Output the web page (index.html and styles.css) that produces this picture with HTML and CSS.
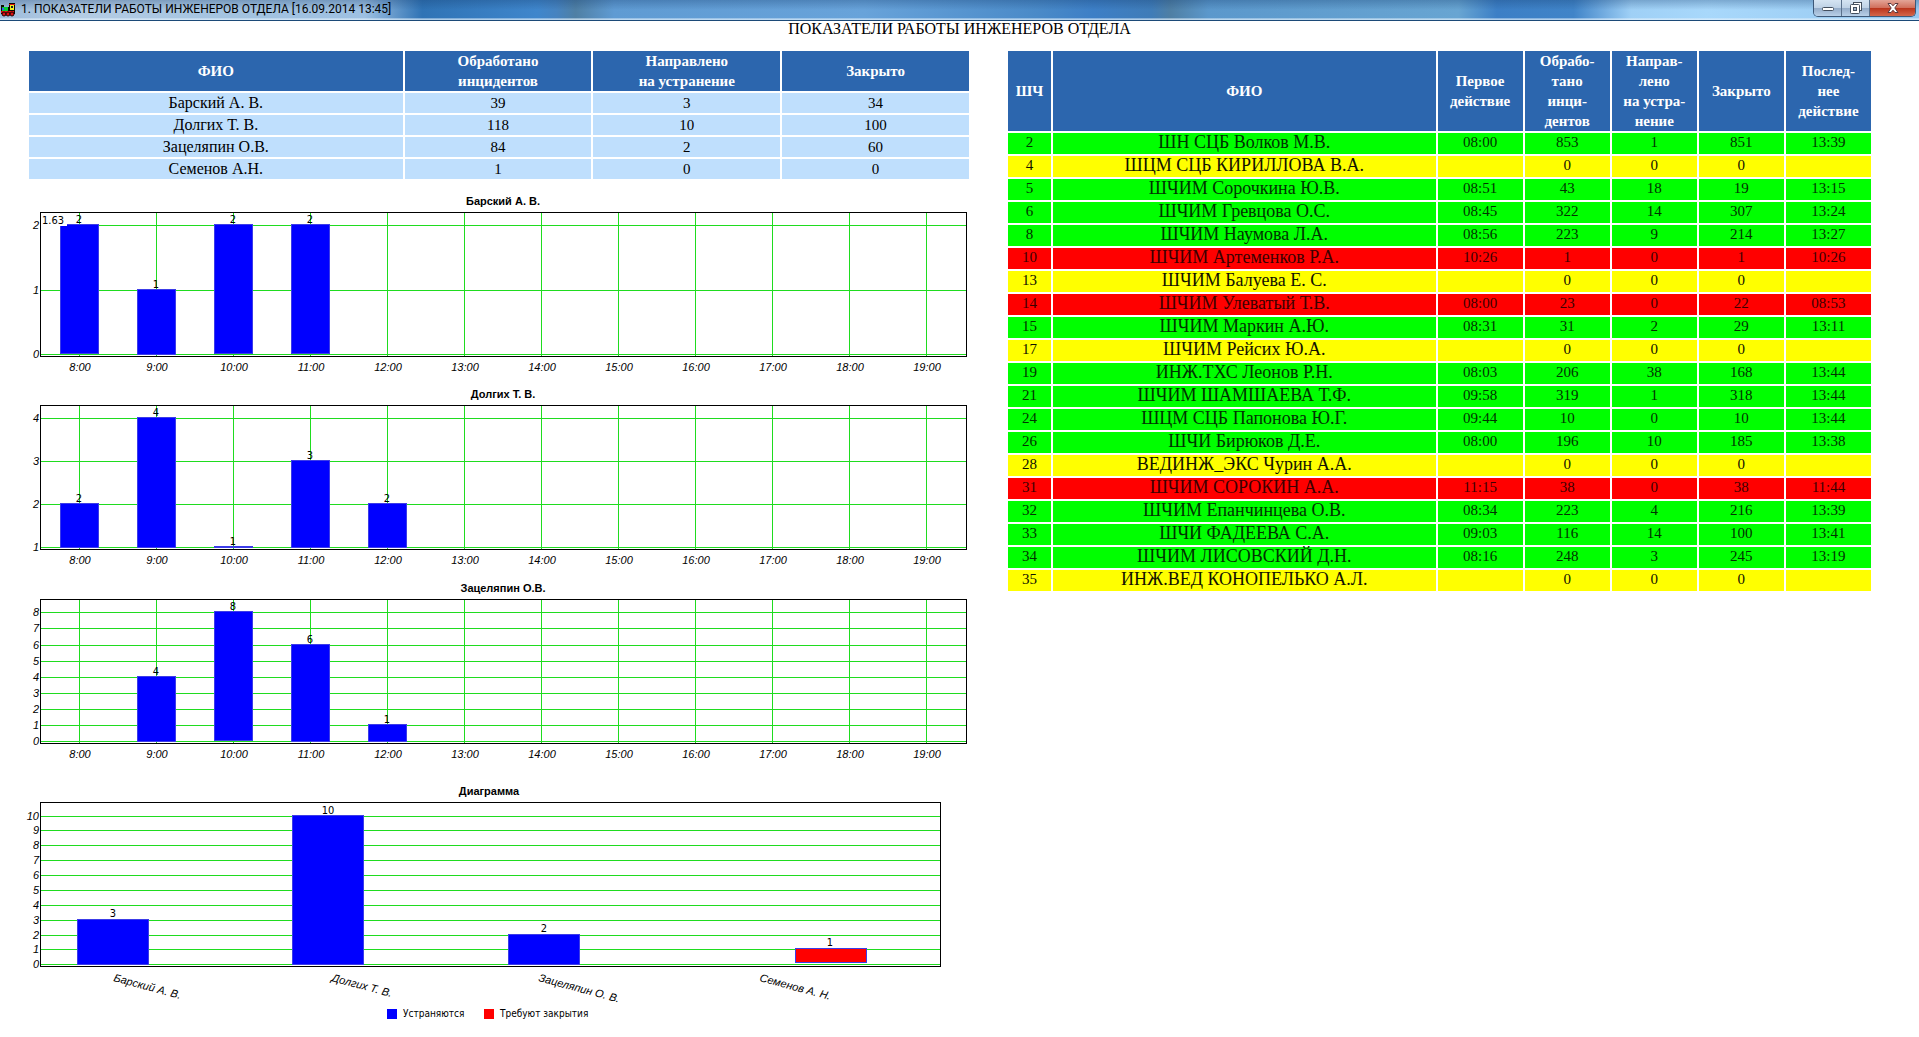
FILE: index.html
```html
<!DOCTYPE html>
<html lang="ru">
<head>
<meta charset="utf-8">
<title>Показатели работы инженеров отдела</title>
<link rel="stylesheet" href="styles.css">
</head>
<body>
<header class="titlebar">
  <svg class="app-icon" width="16" height="15" viewBox="0 0 16 15" aria-hidden="true">
    <path d="M1 3h3v2h5V1h6v11H1z" fill="#0a0a00"/>
    <path d="M2 5h6v4H2z" fill="#0c3"/>
    <path d="M2 6h2v2H2z" fill="#35f"/>
    <path d="M10 3h4v5h-4z" fill="#ee2"/>
    <path d="M11 4h2v2h-2z" fill="#123"/>
    <path d="M1 9h13v2H1zM9 2h6v1H9z" fill="#d11"/>
    <circle cx="4" cy="12" r="2" fill="#d11" stroke="#200"/>
    <circle cx="8" cy="12" r="2" fill="#d11" stroke="#200"/>
    <circle cx="12" cy="12" r="2" fill="#d11" stroke="#200"/>
  </svg>
  <span class="window-title">1. ПОКАЗАТЕЛИ РАБОТЫ ИНЖЕНЕРОВ ОТДЕЛА [16.09.2014 13:45]</span>
  <div class="window-buttons">
    <button class="win-btn" type="button" aria-label="Свернуть"><svg width="14" height="12" viewBox="0 0 14 12"><rect x="1.500" y="5.500" width="11" height="3" rx="1" fill="#fff" stroke="#44505f"/></svg></button>
    <button class="win-btn" type="button" aria-label="Восстановить"><svg width="12" height="12" viewBox="0 0 12 12"><rect x="3.500" y="0.500" width="8" height="8" fill="#fff" stroke="#44505f"/><rect x="0.500" y="2.500" width="9" height="9" rx="1" fill="#fff" stroke="#44505f"/><rect x="3.500" y="5.500" width="3" height="3" fill="#9fb3cc" stroke="#44505f"/></svg></button>
    <button class="win-btn close" type="button" aria-label="Закрыть"><svg width="12" height="10" viewBox="0 0 12 10"><path d="M1 .5h3l2 2.300 2-2.300h3L7.800 5 11 9.500H8L6 7.200 4 9.500H1L4.200 5z" fill="#fff" stroke="#5b3a3f"/></svg></button>
  </div>
</header>
<main>
  <h1 class="page-title">ПОКАЗАТЕЛИ РАБОТЫ ИНЖЕНЕРОВ ОТДЕЛА</h1>
  <div class="columns">
    <section class="left">
      <table class="summary">
        <colgroup><col class="s-name"><col class="s-num"><col class="s-num"><col class="s-num"></colgroup>
        <thead><tr><th>ФИО</th><th>Обработано<br>инцидентов</th><th>Направлено<br>на устранение</th><th>Закрыто</th></tr></thead>
        <tbody>
          <tr><td>Барский А. В.</td><td>39</td><td>3</td><td>34</td></tr>
          <tr><td>Долгих Т. В.</td><td>118</td><td>10</td><td>100</td></tr>
          <tr><td>Зацеляпин О.В.</td><td>84</td><td>2</td><td>60</td></tr>
          <tr><td>Семенов А.Н.</td><td>1</td><td>0</td><td>0</td></tr>
        </tbody>
      </table>
      <div class="charts">
        <svg class="chart" viewBox="0 0 944 180">
          <path class="grid" d="M13 33H939M13 98H939M13 162H939M52 20V164M129 20V164M206 20V164M283 20V164M360 20V164M437 20V164M514 20V164M591 20V164M668 20V164M745 20V164M822 20V164M899 20V164"/>
          <g class="bar"><rect x="33" y="32" width="38" height="129"/><rect x="110" y="97" width="38" height="65"/><rect x="187" y="32" width="38" height="129"/><rect x="264" y="32" width="38" height="129"/></g>
          <rect class="hint" x="14" y="21" width="26" height="13"/>
          <rect class="frame" x="13" y="20" width="926" height="144"/>
          <text class="heading" x="476" y="13">Барский А. В.</text>
          <text class="value start" x="15" y="32">1.63</text>
          <g class="value"><text x="52" y="31">2</text><text x="129" y="96">1</text><text x="206" y="31">2</text><text x="283" y="31">2</text></g>
          <g class="axis-y"><text x="12" y="37">2</text><text x="12" y="102">1</text><text x="12" y="166">0</text></g>
          <g class="axis-x"><text x="53" y="179">8:00</text><text x="130" y="179">9:00</text><text x="207" y="179">10:00</text><text x="284" y="179">11:00</text><text x="361" y="179">12:00</text><text x="438" y="179">13:00</text><text x="515" y="179">14:00</text><text x="592" y="179">15:00</text><text x="669" y="179">16:00</text><text x="746" y="179">17:00</text><text x="823" y="179">18:00</text><text x="900" y="179">19:00</text></g>
        </svg>
        <svg class="chart" viewBox="0 0 944 181">
          <path class="grid" d="M13 33H939M13 76H939M13 119H939M13 162H939M52 20V164M129 20V164M206 20V164M283 20V164M360 20V164M437 20V164M514 20V164M591 20V164M668 20V164M745 20V164M822 20V164M899 20V164"/>
          <g class="bar"><rect x="33" y="118" width="38" height="44"/><rect x="110" y="32" width="38" height="130"/><rect x="187" y="161" width="38" height="1"/><rect x="264" y="75" width="38" height="87"/><rect x="341" y="118" width="38" height="44"/></g>
          <rect class="frame" x="13" y="20" width="926" height="144"/>
          <text class="heading" x="476" y="13">Долгих Т. В.</text>
          <g class="value"><text x="52" y="117">2</text><text x="129" y="31">4</text><text x="206" y="160">1</text><text x="283" y="74">3</text><text x="360" y="117">2</text></g>
          <g class="axis-y"><text x="12" y="37">4</text><text x="12" y="80">3</text><text x="12" y="123">2</text><text x="12" y="166">1</text></g>
          <g class="axis-x"><text x="53" y="179">8:00</text><text x="130" y="179">9:00</text><text x="207" y="179">10:00</text><text x="284" y="179">11:00</text><text x="361" y="179">12:00</text><text x="438" y="179">13:00</text><text x="515" y="179">14:00</text><text x="592" y="179">15:00</text><text x="669" y="179">16:00</text><text x="746" y="179">17:00</text><text x="823" y="179">18:00</text><text x="900" y="179">19:00</text></g>
        </svg>
        <svg class="chart" viewBox="0 0 944 180">
          <path class="grid" d="M13 33H939M13 49H939M13 66H939M13 82H939M13 98H939M13 114H939M13 130H939M13 146H939M13 162H939M52 20V164M129 20V164M206 20V164M283 20V164M360 20V164M437 20V164M514 20V164M591 20V164M668 20V164M745 20V164M822 20V164M899 20V164"/>
          <g class="bar"><rect x="110" y="97" width="38" height="65"/><rect x="187" y="32" width="38" height="129"/><rect x="264" y="65" width="38" height="97"/><rect x="341" y="145" width="38" height="17"/></g>
          <rect class="frame" x="13" y="20" width="926" height="144"/>
          <text class="heading" x="476" y="13">Зацеляпин О.В.</text>
          <g class="value"><text x="129" y="96">4</text><text x="206" y="31">8</text><text x="283" y="64">6</text><text x="360" y="144">1</text></g>
          <g class="axis-y"><text x="12" y="37">8</text><text x="12" y="53">7</text><text x="12" y="70">6</text><text x="12" y="86">5</text><text x="12" y="102">4</text><text x="12" y="118">3</text><text x="12" y="134">2</text><text x="12" y="150">1</text><text x="12" y="166">0</text></g>
          <g class="axis-x"><text x="53" y="179">8:00</text><text x="130" y="179">9:00</text><text x="207" y="179">10:00</text><text x="284" y="179">11:00</text><text x="361" y="179">12:00</text><text x="438" y="179">13:00</text><text x="515" y="179">14:00</text><text x="592" y="179">15:00</text><text x="669" y="179">16:00</text><text x="746" y="179">17:00</text><text x="823" y="179">18:00</text><text x="900" y="179">19:00</text></g>
        </svg>
        <svg class="chart" viewBox="0 0 944 252">
          <path class="grid" d="M13 44H913M13 58H913M13 73H913M13 88H913M13 103H913M13 118H913M13 133H913M13 148H913M13 163H913M13 177H913M13 192H913"/>
          <g class="bar"><rect x="50" y="147" width="71" height="45"/><rect x="265" y="43" width="71" height="149"/><rect x="481" y="162" width="71" height="30"/><rect class="pending" x="768" y="176" width="71" height="14"/></g>
          <rect class="frame" x="13" y="30" width="900" height="164"/>
          <text class="heading" x="462" y="23">Диаграмма</text>
          <g class="value"><text x="86" y="145">3</text><text x="301" y="42">10</text><text x="517" y="160">2</text><text x="803" y="174">1</text></g>
          <g class="axis-y"><text x="12" y="48">10</text><text x="12" y="62">9</text><text x="12" y="77">8</text><text x="12" y="92">7</text><text x="12" y="107">6</text><text x="12" y="122">5</text><text x="12" y="137">4</text><text x="12" y="152">3</text><text x="12" y="167">2</text><text x="12" y="181">1</text><text x="12" y="196">0</text></g>
          <g class="names"><text transform="translate(86 209) rotate(15)">Барский А. В.</text><text transform="translate(304 209) rotate(15)">Долгих Т. В.</text><text transform="translate(511 209) rotate(15)">Зацеляпин О. В.</text><text transform="translate(732 209) rotate(15)">Семенов А. Н.</text></g>
          <rect x="360" y="237" width="10" height="10" fill="#00f"/>
          <rect x="457" y="237" width="10" height="10" fill="#f00"/>
          <g class="legend"><text x="376" y="245">Устраняются</text><text x="473" y="245">Требуют закрытия</text></g>
        </svg>
      </div>
    </section>
    <section class="right">
      <table class="staff">
        <colgroup><col class="c-no"><col><col class="c-num"><col class="c-num"><col class="c-num"><col class="c-num"><col class="c-num"></colgroup>
        <thead><tr><th>ШЧ</th><th>ФИО</th><th>Первое<br>действие</th><th>Обрабо-<br>тано<br>инци-<br>дентов</th><th>Направ-<br>лено<br>на устра-<br>нение</th><th>Закрыто</th><th>Послед-<br>нее<br>действие</th></tr></thead>
        <tbody>
          <tr class="ok"><td>2</td><td>ШН СЦБ Волков М.В.</td><td>08:00</td><td>853</td><td>1</td><td>851</td><td>13:39</td></tr>
          <tr class="idle"><td>4</td><td>ШЦМ СЦБ КИРИЛЛОВА В.А.</td><td></td><td>0</td><td>0</td><td>0</td><td></td></tr>
          <tr class="ok"><td>5</td><td>ШЧИМ Сорочкина Ю.В.</td><td>08:51</td><td>43</td><td>18</td><td>19</td><td>13:15</td></tr>
          <tr class="ok"><td>6</td><td>ШЧИМ Гревцова О.С.</td><td>08:45</td><td>322</td><td>14</td><td>307</td><td>13:24</td></tr>
          <tr class="ok"><td>8</td><td>ШЧИМ Наумова Л.А.</td><td>08:56</td><td>223</td><td>9</td><td>214</td><td>13:27</td></tr>
          <tr class="late"><td>10</td><td>ШЧИМ Артеменков Р.А.</td><td>10:26</td><td>1</td><td>0</td><td>1</td><td>10:26</td></tr>
          <tr class="idle"><td>13</td><td>ШЧИМ Балуева Е. С.</td><td></td><td>0</td><td>0</td><td>0</td><td></td></tr>
          <tr class="late"><td>14</td><td>ШЧИМ Улеватый Т.В.</td><td>08:00</td><td>23</td><td>0</td><td>22</td><td>08:53</td></tr>
          <tr class="ok"><td>15</td><td>ШЧИМ Маркин А.Ю.</td><td>08:31</td><td>31</td><td>2</td><td>29</td><td>13:11</td></tr>
          <tr class="idle"><td>17</td><td>ШЧИМ Рейсих Ю.А.</td><td></td><td>0</td><td>0</td><td>0</td><td></td></tr>
          <tr class="ok"><td>19</td><td>ИНЖ.ТХС Леонов Р.Н.</td><td>08:03</td><td>206</td><td>38</td><td>168</td><td>13:44</td></tr>
          <tr class="ok"><td>21</td><td>ШЧИМ ШАМШАЕВА Т.Ф.</td><td>09:58</td><td>319</td><td>1</td><td>318</td><td>13:44</td></tr>
          <tr class="ok"><td>24</td><td>ШЦМ СЦБ Папонова Ю.Г.</td><td>09:44</td><td>10</td><td>0</td><td>10</td><td>13:44</td></tr>
          <tr class="ok"><td>26</td><td>ШЧИ Бирюков Д.Е.</td><td>08:00</td><td>196</td><td>10</td><td>185</td><td>13:38</td></tr>
          <tr class="idle"><td>28</td><td>ВЕДИНЖ_ЭКС Чурин А.А.</td><td></td><td>0</td><td>0</td><td>0</td><td></td></tr>
          <tr class="late"><td>31</td><td>ШЧИМ СОРОКИН А.А.</td><td>11:15</td><td>38</td><td>0</td><td>38</td><td>11:44</td></tr>
          <tr class="ok"><td>32</td><td>ШЧИМ Епанчинцева О.В.</td><td>08:34</td><td>223</td><td>4</td><td>216</td><td>13:39</td></tr>
          <tr class="ok"><td>33</td><td>ШЧИ ФАДЕЕВА С.А.</td><td>09:03</td><td>116</td><td>14</td><td>100</td><td>13:41</td></tr>
          <tr class="ok"><td>34</td><td>ШЧИМ ЛИСОВСКИЙ Д.Н.</td><td>08:16</td><td>248</td><td>3</td><td>245</td><td>13:19</td></tr>
          <tr class="idle"><td>35</td><td>ИНЖ.ВЕД КОНОПЕЛЬКО А.Л.</td><td></td><td>0</td><td>0</td><td>0</td><td></td></tr>
        </tbody>
      </table>
    </section>
  </div>
</main>
</body>
</html>
```
FILE: styles.css
```css
* { box-sizing: border-box; }
body { margin: 0; background: #fff; color: #000; font-family: "Liberation Serif", "Times New Roman", serif; }

.titlebar {
  display: flex;
  align-items: flex-start;
  height: 21px;
  padding-right: 3px;
  border-bottom: 1px solid #1c4a78;
  background:
    linear-gradient(rgba(20, 60, 110, 0.3) 0, rgba(20, 60, 110, 0) 50%, rgba(20, 60, 110, 0) 88%, rgba(225, 240, 252, 0.7) 95%),
    linear-gradient(90deg, #9dbcdb 0, #b4cce4 4%, #a3c3e0 12%, #9dc0e2 19%, #2f73b5 22%, #3f86cc 28%, #4683c0 29%, #4f7fa4 30%, #5f9bd3 32%, #68a3da 45%, #4a8ac8 54%, #3d7fc6 57%, #3f7cb8 60%, #4f7fa4 61%, #5b98cc 63%, #68a5d2 76%, #3c7fc6 78%, #4084c8 82%, #9fd0f6 85%, #a8d8fb 89%, #97c8f0 100%);
}
.app-icon { display: block; margin-top: 2px; }
.window-title { flex: 1; padding-left: 5px; font: 12px/19px Roboto, sans-serif; white-space: nowrap; }
.window-buttons { display: flex; height: 17px; border: 1px solid #3d5878; border-top: 0; border-radius: 0 0 5px 5px; overflow: hidden; }
.win-btn { display: flex; align-items: center; justify-content: center; width: 28px; margin: 0; padding: 0; border: 0; border-right: 1px solid #5a718c; background: linear-gradient(#d5e4f2 0, #bfd2e6 48%, #93abc8 50%, #b9d0e8 100%); }
.win-btn.close { width: 45px; border-right: 0; background: linear-gradient(#e3a597 0, #d1705c 48%, #b9331a 50%, #d4664a 100%); }

.page-title { margin: 0 0 12px; font-size: 16px; line-height: 16px; font-weight: 400; text-align: center; }
.columns { display: grid; grid-template-columns: 944fr 867fr; gap: 35px; align-items: start; padding: 0 46px 0 27px; }
table { width: 100%; table-layout: fixed; border-collapse: separate; border-spacing: 2px; font-size: 15px; text-align: center; }
th, td { padding: 0; }
th { background: #2c66ae; color: #fff; line-height: 20px; }
.summary td { height: 20px; line-height: 20px; background: #bfdffd; }
.summary td:first-child { font-size: 16px; }
.s-name { width: 40%; }
.s-num { width: 20%; }
.c-no { width: 43px; }
.c-num { width: 10%; }
.staff td { height: 21px; line-height: 19px; vertical-align: top; }
.staff td:nth-child(2) { font-size: 18px; }
.ok td { background: #0f0; color: #003200; }
.idle td { background: #ff0; color: #111100; }
.late td { background: #f00; color: #3c0000; }

.charts { display: grid; gap: 13px; padding-top: 11px; }
.chart { display: block; width: 100%; height: auto; overflow: visible; font-family: "Liberation Sans", Arial, sans-serif; font-size: 11px; }
.grid { fill: none; stroke: #1fdc1f; shape-rendering: crispEdges; }
.frame { fill: none; stroke: #000; shape-rendering: crispEdges; }
.bar { fill: #00f; stroke: #3c3ce8; shape-rendering: crispEdges; }
.pending { fill: #f00; }
.hint { fill: #fff; }
.heading { font-weight: 700; text-anchor: middle; }
.value { font-family: "DejaVu Sans Condensed", "DejaVu Sans", sans-serif; text-anchor: middle; }
.start { text-anchor: start; }
.axis-y { font-style: italic; text-anchor: end; }
.axis-x { font-style: italic; text-anchor: middle; }
.names { font-style: italic; }
.legend { font-family: "DejaVu Sans Condensed", "DejaVu Sans", sans-serif; font-size: 10px; }
```
